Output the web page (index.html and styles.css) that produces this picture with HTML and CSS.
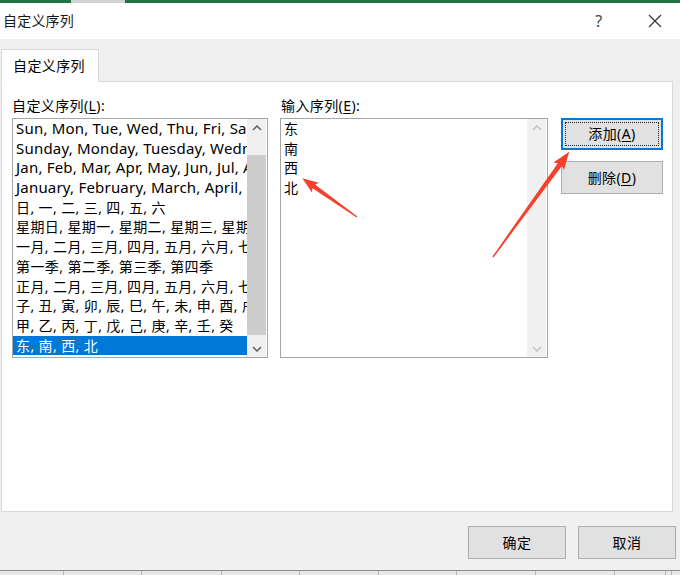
FILE: index.html
```html
<!DOCTYPE html>
<html lang="zh-CN">
<head>
  <meta charset="UTF-8">
  <title>自定义序列</title>
  <link rel="stylesheet" href="styles.css">
</head>
<body>
  <div class="topbar">
    <span class="seg-green" style="width: 71px"></span>
    <span class="seg-grey" style="width: 54px"></span>
    <span class="seg-green seg-fill"></span>
  </div>

  <div class="titlebar">
    <span class="title">自定义序列</span>
    <span class="help">?</span>
    <span class="close">
      <svg width="14" height="14" viewBox="0 0 14 14">
        <path d="M1 1 L13 13 M13 1 L1 13" stroke="#333" stroke-width="1.2" fill="none"/>
      </svg>
    </span>
  </div>

  <div class="tabs">
    <div class="tab">自定义序列</div>
  </div>

  <div class="panel">
    <div class="grid">
      <div class="label">自定义序列(<u>L</u>):</div>
      <div class="label">输入序列(<u>E</u>):</div>
      <div></div>

      <!-- 左边的序列列表 -->
      <div class="listbox lb-left">
        <ul class="items">
          <li class="latin">Sun, Mon, Tue, Wed, Thu, Fri, Sat</li>
          <li class="latin">Sunday, Monday, Tuesday, Wednesday, Thursday</li>
          <li class="latin">Jan, Feb, Mar, Apr, May, Jun, Jul, Aug, Sep</li>
          <li class="latin">January, February, March, April, May, June</li>
          <li>日, 一, 二, 三, 四, 五, 六</li>
          <li>星期日, 星期一, 星期二, 星期三, 星期四</li>
          <li>一月, 二月, 三月, 四月, 五月, 六月, 七月</li>
          <li>第一季, 第二季, 第三季, 第四季</li>
          <li>正月, 二月, 三月, 四月, 五月, 六月, 七月</li>
          <li>子, 丑, 寅, 卯, 辰, 巳, 午, 未, 申, 酉, 戌, 亥</li>
          <li>甲, 乙, 丙, 丁, 戊, 己, 庚, 辛, 壬, 癸</li>
          <li class="selected">东, 南, 西, 北</li>
        </ul>
        <div class="scrollbar">
          <div class="sb-btn">
            <svg width="10" height="6" viewBox="0 0 10 6"><polyline points="1,5 5,1 9,5" fill="none" stroke="#606060" stroke-width="1.5"/></svg>
          </div>
          <div class="sb-track"><div class="sb-thumb"></div></div>
          <div class="sb-btn">
            <svg width="10" height="6" viewBox="0 0 10 6"><polyline points="1,1 5,5 9,1" fill="none" stroke="#606060" stroke-width="1.5"/></svg>
          </div>
        </div>
      </div>

      <!-- 输入序列 -->
      <div class="listbox lb-right">
        <ul class="items">
          <li>东</li>
          <li>南</li>
          <li>西</li>
          <li>北</li>
        </ul>
        <div class="scrollbar">
          <div class="sb-btn">
            <svg width="10" height="6" viewBox="0 0 10 6"><polyline points="1,5 5,1 9,5" fill="none" stroke="#c2c2c2" stroke-width="1.5"/></svg>
          </div>
          <div class="sb-track"></div>
          <div class="sb-btn">
            <svg width="10" height="6" viewBox="0 0 10 6"><polyline points="1,1 5,5 9,1" fill="none" stroke="#c2c2c2" stroke-width="1.5"/></svg>
          </div>
        </div>
      </div>

      <div class="side-btns">
        <button class="btn btn-default">添加(<u>A</u>)</button>
        <button class="btn">删除(<u>D</u>)</button>
      </div>
    </div>
  </div>

  <div class="footer">
    <button class="btn btn-foot">确定</button>
    <button class="btn btn-foot">取消</button>
  </div>

  <div class="sheet">
    <span style="width: 64px"></span>
    <span style="width: 78px"></span>
    <span style="width: 80px"></span>
    <span style="width: 78px"></span>
    <span style="width: 79px"></span>
    <span style="width: 78px"></span>
    <span style="width: 79px"></span>
    <span style="width: 79px"></span>
    <span style="width: 51px"></span>
    <span style="width: 6px"></span>
  </div>

  <!-- 标注箭头 -->
  <svg class="marks" width="680" height="575" viewBox="0 0 680 575">
    <polygon fill="#f5402c" transform="translate(357 217) rotate(-144.7)"
      points="0,-0.6 53,-2.2 51,-6 67,0 51,6 53,2.2 0,0.6"/>
    <polygon fill="#f5402c" transform="translate(493 257) rotate(-54.1)"
      points="0,-0.7 114,-2.5 112,-6.5 130,0 112,6.5 114,2.5 0,0.7"/>
  </svg>
</body>
</html>
```

FILE: styles.css
```css
* {
  box-sizing: border-box;
}
body {
  margin: 0;
  width: 680px;
  height: 575px;
  overflow: hidden;
  position: relative;
  background: #f0f0f0;
  color: #000;
  font-family: "Noto Sans", "Noto Sans CJK SC", sans-serif;
  font-size: 14px;
  letter-spacing: 0.4px;
}
u {
  text-decoration: underline;
  text-underline-offset: 2px;
}

.topbar {
  display: flex;
  height: 3px;
}
.seg-green {
  background: #217346;
}
.seg-grey {
  background: #d2d2d2;
}
.seg-fill {
  flex: 1;
}

.titlebar {
  height: 36px;
  background: #fff;
  display: flex;
  align-items: center;
  padding: 0 2px 0 3px;
}
.title {
  font-size: 14px;
  line-height: 20px;
  color: #1a1a1a;
  letter-spacing: 0.2px;
}
.help {
  margin-left: auto;
  width: 46px;
  text-align: center;
  font-family: "Noto Sans", sans-serif;
  font-size: 16px;
  color: #444;
  margin-right: 10px;
}
.close {
  width: 46px;
  display: flex;
  justify-content: center;
}

.tabs {
  padding: 10px 0 0 1px;
  display: flex;
}
.tab {
  position: relative;
  width: 98px;
  height: 33px;
  margin-bottom: -1px;
  background: #fff;
  border: 1px solid #d9d9d9;
  border-bottom: 1px solid #fff;
  padding-left: 11px;
  line-height: 31px;
}

.panel {
  height: 431px;
  margin: 0 7px 0 1px;
  background: #fff;
  border: 1px solid #d9d9d9;
  padding: 14px 0 0 10px;
}
.grid {
  display: grid;
  grid-template-columns: 256px 268px 103px;
  grid-template-rows: 22px 240px;
  column-gap: 12px;
}
.label {
  line-height: 20px;
}
.label:nth-child(2) {
  padding-left: 1px;
}

.listbox {
  display: flex;
  border: 1px solid #a6a6a6;
  background: #fff;
}
.items {
  flex: 1;
  margin: 0;
  padding: 0;
  list-style: none;
  overflow: hidden;
}
.items li {
  height: 19.7px;
  line-height: 19.7px;
  padding-left: 3px;
  white-space: nowrap;
  overflow: hidden;
}
.items li.latin {
  font-size: 15px;
  letter-spacing: 0.2px;
}
.items li.selected {
  background: #0078d7;
  color: #fff;
}

.scrollbar {
  width: 19px;
  margin-right: 1px;
  background: #f0f0f0;
  display: flex;
  flex-direction: column;
}
.sb-btn {
  height: 17px;
  display: flex;
  align-items: center;
  justify-content: center;
}
.sb-track {
  flex: 1;
  padding-top: 19px;
}
.sb-thumb {
  height: 180px;
  background: #cdcdcd;
}

.side-btns {
  margin-left: 1px;
  display: flex;
  flex-direction: column;
  gap: 11px;
}

.btn {
  font: inherit;
  font-size: 14px;
  letter-spacing: 0.4px;
  color: #000;
  background: #e1e1e1;
  border: 1px solid #adadad;
  padding: 0;
  height: 33px;
  line-height: 20px;
}
.btn-default {
  height: 32px;
  border: 2px solid #0078d7;
  outline: 1px dotted #222;
  outline-offset: -5px;
}

.footer {
  display: flex;
  justify-content: flex-end;
  gap: 12px;
  padding: 14px 4px 0 0;
  height: 58px;
}
.btn-foot {
  width: 98px;
}

.sheet {
  display: flex;
  height: 5px;
  border-top: 1px solid #8e8e8e;
  background: #e8e8e8;
}
.sheet span {
  display: block;
  border-right: 1px solid #b5b5b5;
}

.marks {
  position: absolute;
  left: 0;
  top: 0;
  pointer-events: none;
}
```
